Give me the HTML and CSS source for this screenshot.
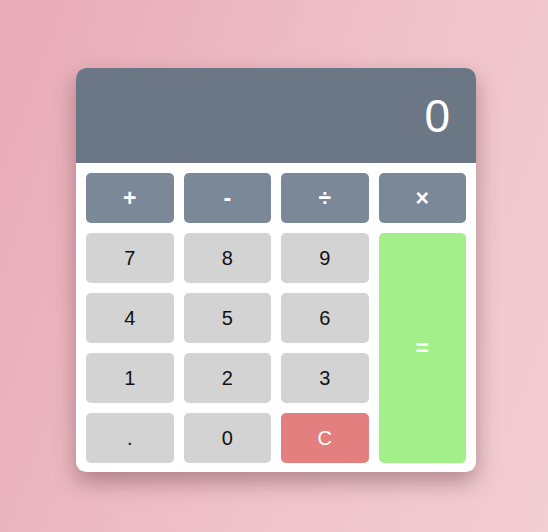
FILE: index.html
```html
<!DOCTYPE html>
<html lang="en">
<head>
  <meta charset="UTF-8" />
  <meta name="viewport" content="width=device-width, initial-scale=1.0"/>
  <title>Calculator</title>
  <link rel="stylesheet" href="styles.css">
</head>
<body>
  <div class="calculator">
    <div class="display" id="display">0</div>
    <div class="keys">
      <button class="op">+</button>
      <button class="op">-</button>
      <button class="op">÷</button>
      <button class="op">×</button>

      <button class="num">7</button>
      <button class="num">8</button>
      <button class="num">9</button>
      <button class="equals">=</button>

      <button class="num">4</button>
      <button class="num">5</button>
      <button class="num">6</button>

      <button class="num">1</button>
      <button class="num">2</button>
      <button class="num">3</button>

      <button class="num">.</button>
      <button class="num">0</button>
      <button class="clear">C</button>
    </div>
  </div>
</body>
</html>
```

FILE: styles.css
```css
* {
  box-sizing: border-box;
  margin: 0;
  padding: 0;
}

body {
  font-family: "Liberation Sans", Arial, sans-serif;
  background: linear-gradient(110deg, #e8aab6 0%, #efc3ca 60%, #f3ced3 100%);
  min-height: 100vh;
  display: flex;
  justify-content: center;
  padding: 68px 0 0 4px;
}

.calculator {
  width: 400px;
  height: 404px;
  background: #ffffff;
  border-radius: 10px;
  overflow: hidden;
  box-shadow: 0 10px 22px rgba(60, 20, 30, 0.35);
}

.display {
  height: 95px;
  background: #6b7785;
  color: #ffffff;
  font-size: 46px;
  text-align: right;
  padding: 21px 26px 0 0;
}

.keys {
  display: grid;
  grid-template-columns: repeat(4, 1fr);
  grid-auto-rows: 50px;
  gap: 10px;
  padding: 10px;
}

.keys button {
  border: none;
  border-radius: 5px;
  font-family: inherit;
  font-size: 20px;
  cursor: pointer;
}

.op {
  background: #7b8898;
  color: #ffffff;
  font-weight: bold;
  font-size: 23px !important;
}

.num {
  background: #d3d3d3;
  color: #111111;
}

.equals {
  grid-column: 4;
  grid-row: 2 / span 4;
  background: #a3ef8a;
  color: #ffffff;
  font-weight: bold;
  font-size: 23px !important;
}

.clear {
  background: #e37f7f;
  color: #ffffff;
}
```
